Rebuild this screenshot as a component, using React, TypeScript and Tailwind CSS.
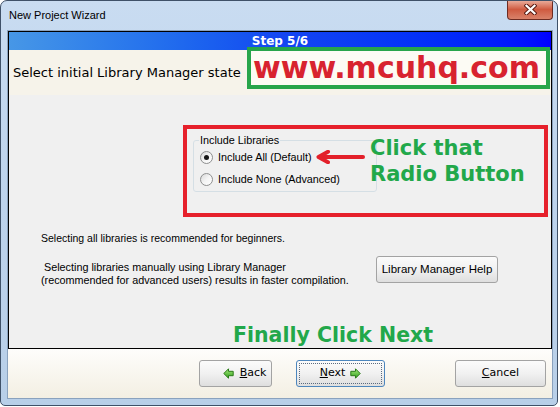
import React from 'react'

const ui = "font-['Liberation_Sans',Arial,sans-serif]"
const dv = "font-['DejaVu_Sans',Verdana,sans-serif]"

function Radio({ checked }: { checked?: boolean }) {
  return (
    <span className="flex h-[13px] w-[13px] shrink-0 items-center justify-center rounded-full border border-[#8e8f8f] bg-linear-to-br from-[#d8d8d8] via-[#f4f4f4] to-[#ffffff]">
      {checked && <span className="h-[5px] w-[5px] rounded-full bg-[#161616]" />}
    </span>
  )
}

function GreenArrow({ right, id }: { right?: boolean; id: string }) {
  return (
    <svg width="11" height="11" viewBox="0 0 11 11">
      <defs>
        <linearGradient id={id} x1="0" y1="0" x2="0" y2="1">
          <stop offset="0" stopColor="#a8ec7c" />
          <stop offset="1" stopColor="#2f9e1c" />
        </linearGradient>
      </defs>
      <g transform={right ? 'translate(11 0) scale(-1 1)' : undefined}>
        <polygon
          points="0.8,5.5 5.5,0.8 5.5,3.3 10.2,3.3 10.2,7.7 5.5,7.7 5.5,10.2"
          fill={`url(#${id})`}
          stroke="#2a7a18"
          strokeWidth="1"
          strokeLinejoin="round"
        />
      </g>
    </svg>
  )
}

function WinButton({ children, focused, className }: { children: React.ReactNode; focused?: boolean; className?: string }) {
  return (
    <div
      className={`relative flex h-[27px] items-center rounded-[3px] border bg-linear-to-b from-[#fbfbfb] via-[#f1f1f1] to-[#dedede] ${
        focused ? 'border-[#4d86bd]' : 'border-[#a3a3a3]'
      } ${className ?? ''}`}
    >
      {focused && <div className="pointer-events-none absolute inset-[2px] border border-dotted border-[#5b6b80]" />}
      {children}
    </div>
  )
}

export default function App() {
  return (
    <div className={`h-[407px] w-[560px] overflow-hidden bg-white ${ui}`}>
      {/* window frame */}
      <div className="flex h-[406px] w-[558px] flex-col overflow-hidden rounded-t-[7px] rounded-b-[5px] border border-[#3f5168] bg-linear-to-b from-[#c9dcf1] via-[#bdd3ec] to-[#b8cfe8]">
        {/* title bar */}
        <div className="relative flex h-[29px] shrink-0 items-center pl-[8px]">
          <span className="text-[11px] text-black">New Project Wizard</span>
          <div className="absolute right-[4px] top-[-1px] flex h-[20px] w-[46px] items-center justify-center rounded-b-[4px] border border-t-0 border-[#6e2c22] bg-linear-to-b from-[#eab2a2] via-[#cf5a40] to-[#d9826a]">
            <svg width="13" height="11" viewBox="0 0 13 11">
              <path d="M2.5 1.8 L10.5 9.2 M10.5 1.8 L2.5 9.2" stroke="#5b1d14" strokeWidth="4.2" strokeLinecap="square" />
              <path d="M2.5 1.8 L10.5 9.2 M10.5 1.8 L2.5 9.2" stroke="#ffffff" strokeWidth="2.2" strokeLinecap="square" />
            </svg>
          </div>
        </div>

        {/* client area */}
        <div className="ml-[6px] mr-[4px] flex flex-1 flex-col border border-[#8aa2be] bg-[#f7f5ee]">
          {/* wizard panel */}
          <div className="relative flex h-[318px] flex-col border border-black bg-[#f0f0f0]">
            <div className="flex h-[18px] shrink-0 items-center justify-center bg-linear-to-r from-[#4797e6] via-[#1546f1] to-[#0000ff]">
              <span className={`${dv} text-[12px] font-bold leading-none text-white`}>Step 5/6</span>
            </div>
            <div className="flex h-[45px] shrink-0 items-center bg-[#f6f3ea] pl-[4px]">
              <span className={`${dv} text-[13px] text-black`}>Select initial Library Manager state</span>
            </div>

            {/* body */}
            <div className="flex flex-1 flex-col text-[10.8px] leading-[13px] text-black">
              <div className="relative ml-[184px] mt-[45px] flex h-[52px] w-[184px] flex-col rounded-[3px] border border-[#d5dfe5] pl-[6px] pt-[5px]">
                <span className="absolute left-[5px] top-[-7px] bg-[#f0f0f0] px-[1px]">Include Libraries</span>
                <div className="flex h-[22px] items-center gap-[5px]">
                  <Radio checked />
                  <span>Include All (Default)</span>
                </div>
                <div className="flex h-[22px] items-center gap-[5px]">
                  <Radio />
                  <span>Include None (Advanced)</span>
                </div>
              </div>

              <p className="ml-[32px] mt-[40px] text-[10.5px]">Selecting all libraries is recommended for beginners.</p>

              <div className="ml-[32px] mt-[11px] flex items-start">
                <div className="mt-[5px] w-[335px]">
                  <p>&nbsp;Selecting libraries manually using Library Manager</p>
                  <p>(recommended for advanced users) results in faster compilation.</p>
                </div>
                <WinButton className="w-[122px] justify-center">
                  <span className="text-[11.5px]">Library Manager Help</span>
                </WinButton>
              </div>

              <p className={`${dv} ml-[224px] mt-[36px] text-[20.5px] font-bold leading-[24px] text-[#22a84a]`}>Finally Click Next</p>
            </div>

            {/* annotations */}
            <div className="absolute left-[238px] top-[15px] flex h-[42px] w-[303px] items-center border-[4px] border-[#27a54a] bg-[#fcfbf4] pl-[2px]">
              <span className={`${dv} text-[30px] font-bold leading-none text-[#d8232f]`}>www.mcuhq.com</span>
            </div>
            <div className="absolute left-[174px] top-[93px] h-[92px] w-[365px] border-[4px] border-[#e6202b]" />
            <svg className="absolute left-[306px] top-[118px]" width="50" height="14" viewBox="0 0 50 14">
              <path d="M48 7 L5 7" stroke="#e3202a" strokeWidth="4" strokeLinecap="round" />
              <path d="M13 1.8 L3.5 7 L13 12.2" stroke="#e3202a" strokeWidth="4" fill="none" strokeLinecap="round" strokeLinejoin="round" />
            </svg>
            <div className={`${dv} absolute left-[361px] top-[103px] text-[21px] font-bold leading-[26px] text-[#22a84a]`}>
              <p>Click that</p>
              <p>Radio Button</p>
            </div>
          </div>

          {/* footer */}
          <div className="flex flex-1 items-start bg-linear-to-b from-[#fefdfb] to-[#f3efe3] pt-[11px]">
            <WinButton className="ml-[191px] w-[73px] justify-center gap-[6px] pl-[18px]">
              <GreenArrow id="ga-back" />
              <span className={`${dv} text-[11px]`}>
                <span className="underline">B</span>ack
              </span>
            </WinButton>
            <WinButton focused className="ml-[24px] w-[89px] justify-center gap-[5px]">
              <span className={`${dv} text-[11px]`}>
                <span className="underline">N</span>ext
              </span>
              <GreenArrow right id="ga-next" />
            </WinButton>
            <WinButton className="ml-[70px] w-[91px] justify-center">
              <span className={`${dv} text-[11px]`}>
                <span className="underline">C</span>ancel
              </span>
            </WinButton>
          </div>
        </div>
        <div className="h-[6px] shrink-0" />
      </div>
    </div>
  )
}
